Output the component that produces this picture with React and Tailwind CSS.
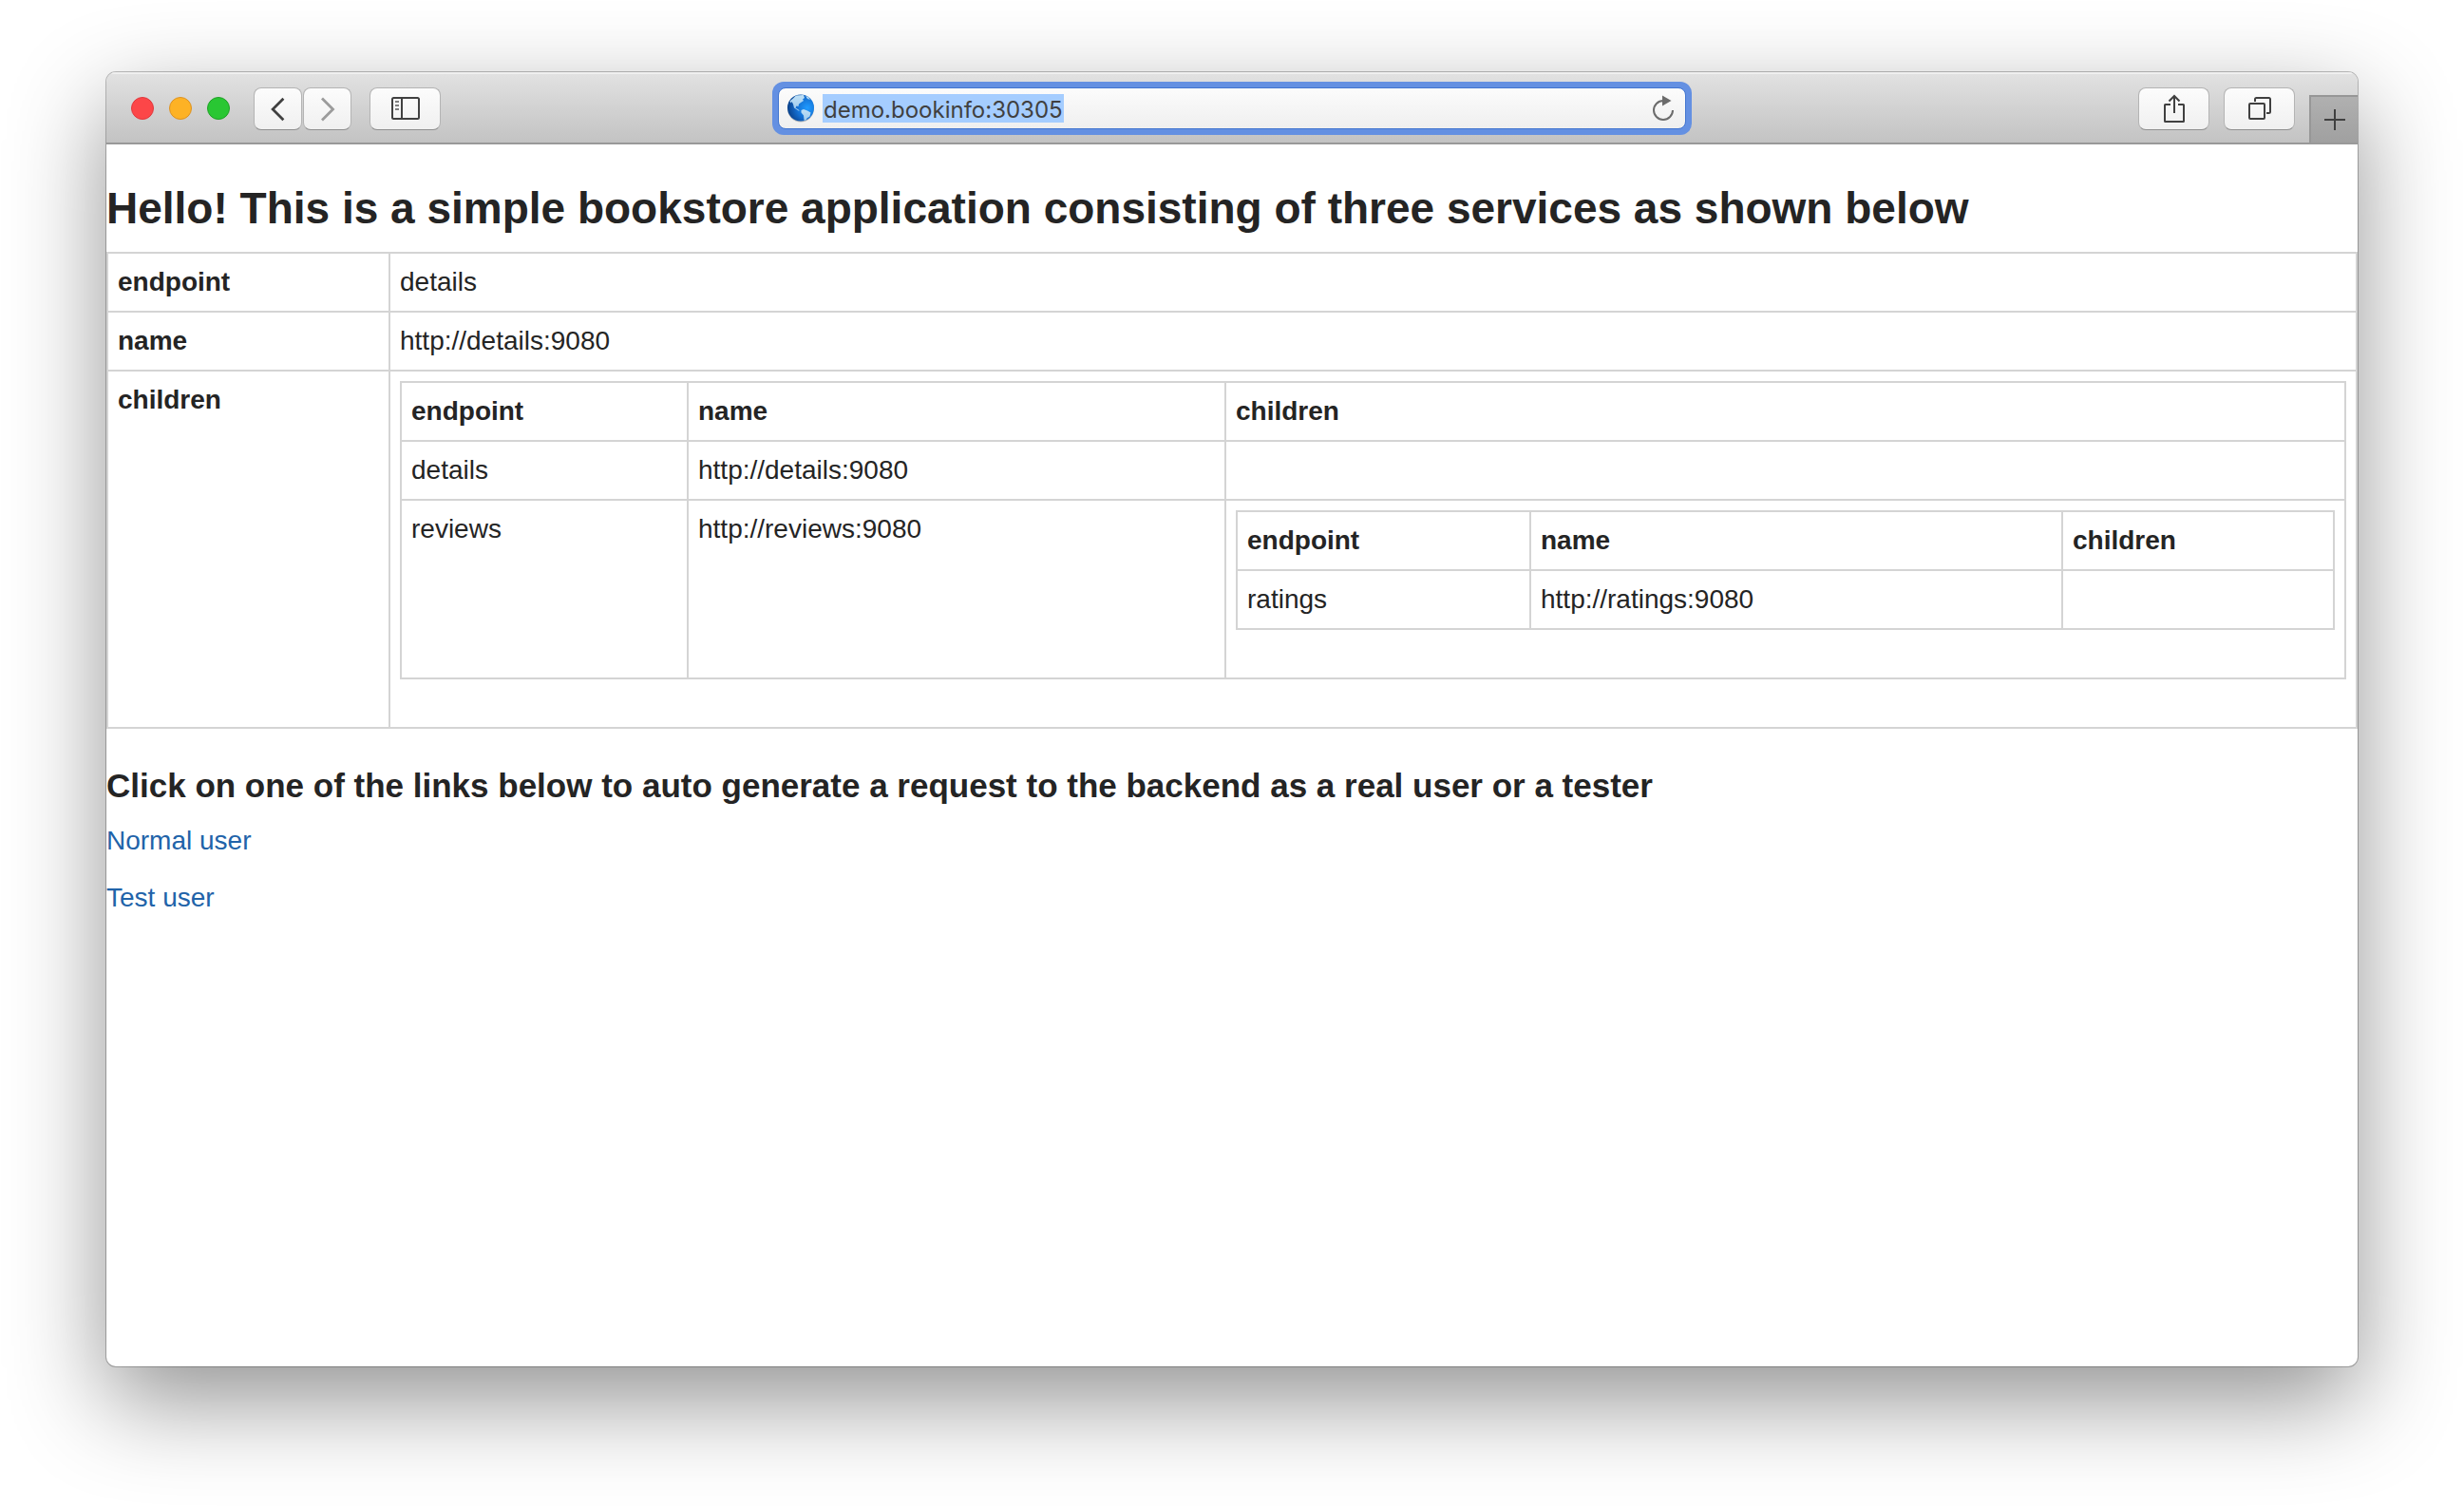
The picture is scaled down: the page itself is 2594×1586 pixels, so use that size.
import React from "react";

const toolButton =
  "flex h-[45px] items-center justify-center rounded-lg border border-[#b4b4b4] border-b-[#8f8f8f] bg-linear-to-b from-[#fcfcfc] to-[#f0f0f0] text-[#404040]";

function BackIcon() {
  return (
    <svg width="50" height="43" viewBox="0 0 50 43" fill="none" stroke="currentColor" strokeWidth="2.8">
      <path d="M31 10.5 19.5 22 31 33.5" />
    </svg>
  );
}

function ForwardIcon() {
  return (
    <svg width="50" height="43" viewBox="0 0 50 43" fill="none" stroke="currentColor" strokeWidth="2.8">
      <path d="M19 10.5 30.5 22 19 33.5" />
    </svg>
  );
}

function SidebarIcon() {
  return (
    <svg width="30" height="24" viewBox="0 0 30 24" fill="none" stroke="currentColor" strokeWidth="2">
      <rect x="1" y="1" width="28" height="22" rx="1.5" />
      <path d="M11 1v22" />
      <path d="M4 5h4M4 9h4M4 13h4" stroke="#808080" />
    </svg>
  );
}

function ShareIcon() {
  return (
    <svg width="24" height="32" viewBox="0 0 24 32" fill="none" stroke="currentColor" strokeWidth="2">
      <path d="M8 12H2.500Q2 12 2 12.500V29.500Q2 30 2.500 30H21.500Q22 30 22 29.500V12.500Q22 12 21.500 12H16" />
      <path d="M12 21V3M6.500 8.500 12 3l5.500 5.500" />
    </svg>
  );
}

function TabsIcon() {
  return (
    <svg width="26" height="26" viewBox="0 0 26 26" fill="none" stroke="currentColor" strokeWidth="2">
      <rect x="2" y="8" width="16" height="16" rx="1" />
      <path d="M8 6V3.500Q8 2 9.500 2H22.500Q24 2 24 3.500V16.500Q24 18 22.500 18H20" />
    </svg>
  );
}

function ReloadIcon() {
  return (
    <svg width="24" height="28" viewBox="0 0 24 28" fill="none">
      <path d="M12 6A10 10 0 1 0 22 16" stroke="#6b6b6b" strokeWidth="2" />
      <path d="M11 0.500 20.500 6 11 11.500Z" fill="#6b6b6b" />
    </svg>
  );
}

function GlobeIcon() {
  return (
    <svg width="30" height="30" viewBox="0 0 30 30" className="shrink-0">
      <defs>
        <radialGradient id="ocean" cx="0.75" cy="0.5" r="0.8">
          <stop offset="0" stopColor="#1f9bff" />
          <stop offset="0.5" stopColor="#146fd2" />
          <stop offset="1" stopColor="#083a80" />
        </radialGradient>
        <linearGradient id="land" x1="0" y1="0" x2="0" y2="1">
          <stop offset="0" stopColor="#bfe0f6" />
          <stop offset="1" stopColor="#9cc9ec" />
        </linearGradient>
        <clipPath id="disc">
          <circle cx="15" cy="14.500" r="14" />
        </clipPath>
      </defs>
      <circle cx="15" cy="15.500" r="14" fill="#9a9a9a" opacity="0.6" />
      <circle cx="15" cy="14.500" r="14" fill="url(#ocean)" />
      <g clipPath="url(#disc)" fill="url(#land)">
        <path d="M7 4.500 10 1.500 18 1l1 3-2 1.500 1 1.500-3 2-2 1.500-.5 2.500-2-.5-1 2 2.500 1.500 2 1.500-1.500 0-4.500-3-1-4-1.500-2.500-1 1.500-1-2Z" />
        <path d="M15.500 17 18 16l4 1.500 3.500 2-1 4-3 2-1.500 3-1.500-1-.5-5-2.500-3Z" />
        <path d="m20 2 3 1 2 3-3-1Z" />
      </g>
    </svg>
  );
}

function PlusIcon() {
  return (
    <svg width="22" height="22" viewBox="0 0 22 22" stroke="#404040" strokeWidth="2">
      <path d="M11 0v22M0 11h22" />
    </svg>
  );
}

function Toolbar() {
  return (
    <header className="grid h-[76px] grid-cols-[1fr_minmax(0,968px)_1fr] items-center border-b-2 border-[#999999] bg-linear-to-b from-[#e2e2e2] to-[#c3c3c3] pt-0.5 shadow-[inset_0_2px_0_#efefef]">
      <div className="flex items-center pl-[26px]">
        <div className="mr-[25px] flex gap-4">
          <button aria-label="Close" className="size-6 rounded-full border border-[#e0383d] bg-[#fc4648]" />
          <button aria-label="Minimize" className="size-6 rounded-full border border-[#dd9222] bg-[#fdb225]" />
          <button aria-label="Zoom" className="size-6 rounded-full border border-[#1fa126] bg-[#29c733]" />
        </div>
        <div className="mr-[19px] flex gap-px">
          <button aria-label="Back" className={`${toolButton} w-[51px]`}>
            <BackIcon />
          </button>
          <button aria-label="Forward" className={`${toolButton} w-[51px]`}>
            <span className="text-[#9b9b9b]">
              <ForwardIcon />
            </span>
          </button>
        </div>
        <button aria-label="Show sidebar" className={`${toolButton} w-[75px]`}>
          <SidebarIcon />
        </button>
      </div>

      <div className="flex h-14 items-center rounded-xl bg-[#6490e2] p-1.5">
        <div className="flex h-full w-full items-center rounded-lg border border-[#4275cf] bg-linear-to-b from-[#fcfcfc] to-[#efefef] pr-[11px] pl-2">
          <GlobeIcon />
          <input
            aria-label="Address"
            type="text"
            defaultValue="demo.bookinfo:30305"
            className="ml-2 field-sizing-content h-[30px] bg-[#a5cdff] px-px pt-0.5 font-['Inter'] text-[24px] leading-7 text-[#404040] outline-none"
          />
          <button aria-label="Reload" className="ml-auto">
            <ReloadIcon />
          </button>
        </div>
      </div>

      <div className="flex h-full items-center justify-end">
        <button aria-label="Share" className={`${toolButton} mr-[15px] w-[75px]`}>
          <ShareIcon />
        </button>
        <button aria-label="Show all tabs" className={`${toolButton} mr-[15px] w-[75px]`}>
          <TabsIcon />
        </button>
        <button
          aria-label="New tab"
          className="flex h-[50px] w-[51px] items-center justify-center self-end border-t-2 border-l-2 border-[#979797] bg-linear-to-b from-[#b0b0b0] to-[#a0a0a0]"
        >
          <PlusIcon />
        </button>
      </div>
    </header>
  );
}

const cell = "border-2 border-[#d4d4d4] p-2.5 text-left align-top";

function ServiceTable({ cols, rows }) {
  return (
    <table className="mb-10 w-full table-fixed border-collapse">
      <colgroup>
        <col className={cols[0]} />
        <col className={cols[1]} />
        <col />
      </colgroup>
      <thead>
        <tr>
          <th className={cell}>endpoint</th>
          <th className={cell}>name</th>
          <th className={cell}>children</th>
        </tr>
      </thead>
      <tbody>
        {rows.map((row) => (
          <tr key={row.endpoint}>
            <td className={cell}>{row.endpoint}</td>
            <td className={cell}>{row.name}</td>
            <td className={cell}>{row.children}</td>
          </tr>
        ))}
      </tbody>
    </table>
  );
}

const ratings = (
  <ServiceTable
    cols={["w-[309px]", "w-[560px]"]}
    rows={[{ endpoint: "ratings", name: "http://ratings:9080" }]}
  />
);

const services = (
  <ServiceTable
    cols={["w-[302px]", "w-[566px]"]}
    rows={[
      { endpoint: "details", name: "http://details:9080" },
      { endpoint: "reviews", name: "http://reviews:9080", children: ratings },
    ]}
  />
);

export default function App() {
  return (
    <div className="flex min-h-screen flex-col bg-white px-28 pt-[76px] pb-[148px]">
      <div className="flex flex-1 flex-col overflow-hidden rounded-[10px] bg-white shadow-[0_0_0_1px_rgba(0,0,0,0.25),0_36px_100px_rgba(0,0,0,0.43)]">
        <Toolbar />
        <main className="pt-10 font-['Liberation_Sans',Arial,sans-serif] text-[28px] leading-10 text-[#242424]">
          <h3 className="mb-[18px] text-[46px] leading-[55px] font-bold">
            Hello! This is a simple bookstore application consisting of three services as shown below
          </h3>
          <table className="mb-10 w-full table-fixed border-collapse">
            <colgroup>
              <col className="w-[297px]" />
              <col />
            </colgroup>
            <tbody>
              <tr>
                <th className={cell}>endpoint</th>
                <td className={cell}>details</td>
              </tr>
              <tr>
                <th className={cell}>name</th>
                <td className={cell}>http://details:9080</td>
              </tr>
              <tr>
                <th className={cell}>children</th>
                <td className={cell}>{services}</td>
              </tr>
            </tbody>
          </table>
          <h4 className="mb-[18px] text-[35px] font-bold">
            Click on one of the links below to auto generate a request to the backend as a real user or a tester
          </h4>
          <p className="mb-5">
            <a href="#normal" className="text-[#2163a9]">
              Normal user
            </a>
          </p>
          <p className="mb-5">
            <a href="#test" className="text-[#2163a9]">
              Test user
            </a>
          </p>
        </main>
      </div>
    </div>
  );
}
